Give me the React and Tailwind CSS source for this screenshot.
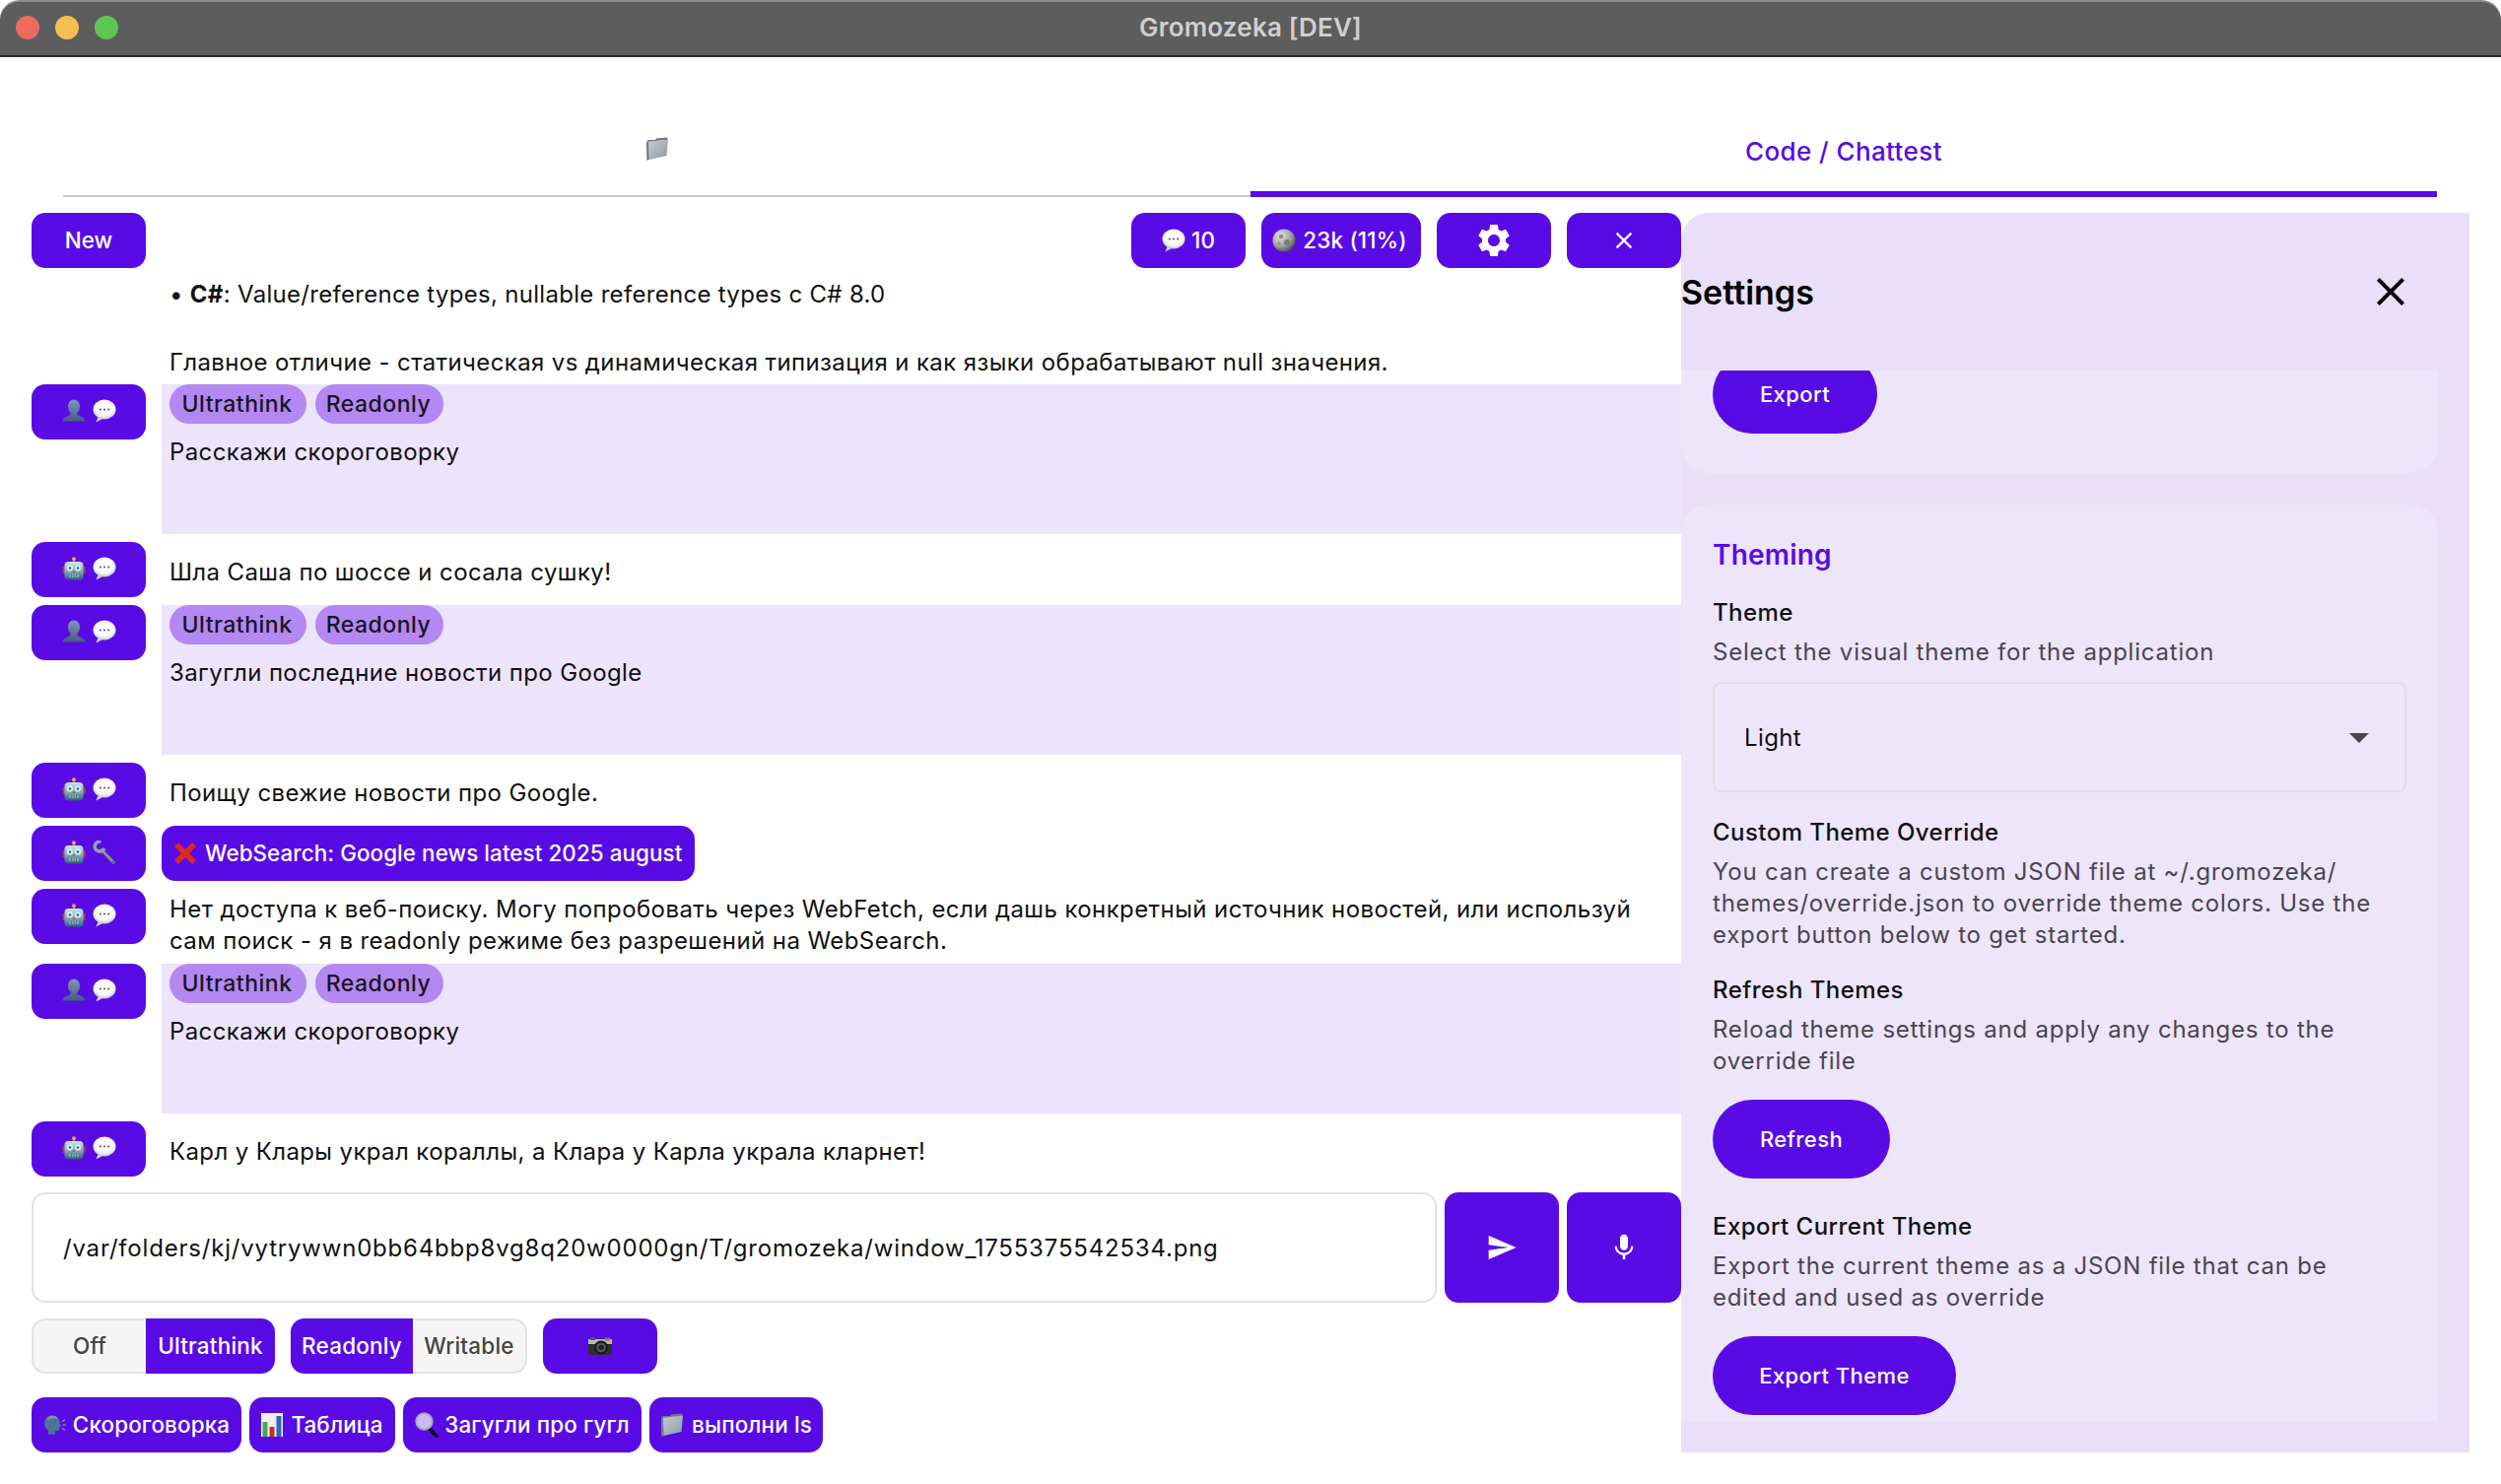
import React from "react";

const Bubble = ({ s = 24 }) => (
  <svg width={s} height={s} viewBox="0 0 24 24" className="shrink-0">
    <defs>
      <radialGradient id="bubG" cx="50%" cy="40%" r="60%">
        <stop offset="0%" stopColor="#ffffff" />
        <stop offset="70%" stopColor="#f6f6f6" />
        <stop offset="100%" stopColor="#c4c4c8" />
      </radialGradient>
    </defs>
    <path d="M6 17 L3.500 23.500 L11 19.500z" fill="#d6d6da" />
    <ellipse cx="12" cy="10.500" rx="11.500" ry="10" fill="url(#bubG)" />
    <circle cx="7.800" cy="10.500" r="1" fill="#555" />
    <circle cx="12" cy="10.500" r="1" fill="#555" />
    <circle cx="16.200" cy="10.500" r="1" fill="#555" />
  </svg>
);

const Bust = () => (
  <svg width="24" height="24" viewBox="0 0 24 24" className="shrink-0">
    <defs>
      <linearGradient id="bustG" x1="0" y1="0" x2="0" y2="1">
        <stop offset="0%" stopColor="#7d97ba" />
        <stop offset="100%" stopColor="#455a84" />
      </linearGradient>
    </defs>
    <path
      d="M12 .5c3.600 0 6 3 6 6.800 0 3-1.200 5.300-2.600 6.700-.4 1.400.2 2.300 1.800 3 2.700 1 5.800 2 6.300 5.500H.5c.5-3.500 3.600-4.500 6.300-5.500 1.600-.7 2.200-1.600 1.800-3C7.200 12.600 6 10.300 6 7.300 6 3.500 8.400.5 12 .5z"
      fill="url(#bustG)"
    />
  </svg>
);

const Robot = () => (
  <svg width="24" height="24" viewBox="0 0 24 24" className="shrink-0">
    <defs>
      <linearGradient id="robG" x1="0" y1="0" x2="0" y2="1">
        <stop offset="0%" stopColor="#cfe9f0" />
        <stop offset="50%" stopColor="#7db2c4" />
        <stop offset="100%" stopColor="#2f5f74" />
      </linearGradient>
    </defs>
    <rect x="11" y="2" width="2" height="4" fill="#9a8a60" />
    <circle cx="12" cy="2.200" r="2" fill="#f0a830" />
    <rect x=".5" y="10" width="3" height="7" rx="1" fill="#b5402f" />
    <rect x="20.500" y="10" width="3" height="7" rx="1" fill="#b5402f" />
    <rect x="2.500" y="5" width="19" height="18.500" rx="4" fill="url(#robG)" />
    <circle cx="8" cy="11.500" r="3" fill="#d8f2f8" />
    <circle cx="16" cy="11.500" r="3" fill="#d8f2f8" />
    <circle cx="8" cy="11.500" r="1.200" fill="#27566a" />
    <circle cx="16" cy="11.500" r="1.200" fill="#27566a" />
    <path d="M12 13l1.500 3h-3z" fill="#d5493a" />
    <rect x="7" y="17.500" width="10" height="3.500" rx="1" fill="#8fa3ac" />
    <path d="M9.500 17.500v3.500M12 17.500v3.500M14.500 17.500v3.500" stroke="#46606d" strokeWidth=".7" />
  </svg>
);

const Wrench = () => (
  <svg width="24" height="24" viewBox="0 0 24 24" className="shrink-0">
    <path d="M9 9.500 L21 22" stroke="#6c7076" strokeWidth="3.600" strokeLinecap="round" />
    <path d="M9 9.500 L21 22" stroke="#9b9fa5" strokeWidth="1.600" strokeLinecap="round" />
    <path d="M8.500 1.200 A5 5 0 1 0 11.800 8 " fill="none" stroke="#9ea2a8" strokeWidth="3.400" />
    <circle cx="20.500" cy="21.500" r=".8" fill="#3d4045" />
  </svg>
);

const RedX = () => (
  <svg width="24" height="24" viewBox="0 0 24 24" className="shrink-0">
    <path d="M3 3 L21 21 M21 3 L3 21" stroke="#dc2b1c" strokeWidth="5.500" />
  </svg>
);

const Moon = () => (
  <svg width="24" height="24" viewBox="0 0 24 24" className="shrink-0">
    <defs>
      <radialGradient id="moonG" cx="35%" cy="30%" r="75%">
        <stop offset="0%" stopColor="#e2e2e2" />
        <stop offset="60%" stopColor="#a3a3a3" />
        <stop offset="100%" stopColor="#4e4e4e" />
      </radialGradient>
    </defs>
    <circle cx="12" cy="12" r="11.500" fill="url(#moonG)" />
    <circle cx="9" cy="8" r="2.200" fill="#8b8b8b" />
    <circle cx="15" cy="14" r="3" fill="#7b7b7b" />
    <circle cx="7" cy="15" r="1.500" fill="#929292" />
  </svg>
);

const Camera = () => (
  <svg width="24" height="20" viewBox="0 0 24 20" className="shrink-0">
    <rect x="0" y="3" width="24" height="16" rx="1.500" fill="#2e2e30" />
    <rect x="0" y="3" width="24" height="5" fill="#b9b9b6" />
    <rect x="2" y="1" width="5" height="3" fill="#555" />
    <rect x="17" y="1.500" width="5" height="3" fill="#777" />
    <rect x="20" y="4.500" width="3" height="2" fill="#d9b23a" />
    <circle cx="13" cy="11.500" r="7" fill="#1a1a1c" />
    <circle cx="13" cy="11.500" r="4.800" fill="#5a5a60" />
    <circle cx="13" cy="11.500" r="2.800" fill="#25252a" />
  </svg>
);

const Speaking = () => (
  <svg width="24" height="24" viewBox="0 0 24 24" className="shrink-0">
    <path
      d="M9 2.500c4.500 0 7.500 3 7.500 7 0 1 .2 1.500 1 2.800.4.700 0 1.200-1 1.500.2.900.1 1.500-.4 1.800.2 1.500-.5 2.500-2.500 2.500h-1.500v3.400H5v-4C2.500 16 1 13.400 1 10.300 1 5.700 4.500 2.500 9 2.500z"
      fill="#4f7299"
    />
    <path d="M9 2.500c3 0 5 1.500 6 4-3-2-8-1.500-11 1.500C4 5 6 2.500 9 2.500z" fill="#7896b8" />
    <path d="M19 8.500l3-1.500M19.500 12h3.500M19 15.500l3 1.500" stroke="#8aa3c2" strokeWidth="1.100" />
  </svg>
);

const Chart = () => (
  <svg width="22" height="24" viewBox="0 0 22 24" className="shrink-0">
    <rect width="22" height="24" fill="#eef0f4" />
    <rect x="1.500" y="9" width="5" height="15" fill="#4ca845" />
    <rect x="8.500" y="14" width="5" height="10" fill="#c6302a" />
    <rect x="15.500" y="3" width="5" height="21" fill="#2f68b8" />
  </svg>
);

const Magnifier = () => (
  <svg width="24" height="26" viewBox="0 0 24 26" className="shrink-0">
    <path d="M14 16 L22 24.500" stroke="#111" strokeWidth="4" strokeLinecap="round" />
    <circle cx="9.500" cy="9.500" r="8.200" fill="#cdbaf2" stroke="#a8a8ac" strokeWidth="2" />
  </svg>
);

const Folder = ({ w = 24, h = 24 }) => (
  <svg width={w} height={h} viewBox="0 0 24 24" className="shrink-0">
    <defs>
      <linearGradient id="folG" x1="0" y1="0" x2="1" y2="1">
        <stop offset="0%" stopColor="#c9ced4" />
        <stop offset="100%" stopColor="#8d97a3" />
      </linearGradient>
    </defs>
    <path d="M1 4 L3 3 L10 3 L11 1.500 L22 .5 L22.500 3 L3 5z" fill="#6f7780" />
    <path d="M1 5 L23 2.500 L21.500 19 L1.500 23.500z" fill="url(#folG)" />
    <path d="M1 5 L3 5 L3.500 23 L1.500 23.500z" fill="#717a84" />
  </svg>
);

const Glyph = ({ d, size, className = "" }) => (
  <svg width={size} height={size} viewBox="0 0 24 24" fill="currentColor" className={`shrink-0 ${className}`}>
    <path d={d} />
  </svg>
);

const closeD = "M19 6.410 17.590 5 12 10.590 6.410 5 5 6.410 10.590 12 5 17.590 6.410 19 12 13.410 17.590 19 19 17.590 13.410 12z";
const gearD = "M19.140 12.940c.04-.3.06-.61.06-.94 0-.32-.02-.64-.07-.94l2.030-1.580c.18-.14.23-.41.12-.61l-1.920-3.320c-.12-.22-.37-.29-.59-.22l-2.390.96c-.5-.38-1.030-.7-1.620-.94l-.36-2.540c-.04-.24-.24-.41-.48-.41h-3.840c-.24 0-.43.17-.47.41l-.36 2.540c-.59.24-1.130.57-1.620.94l-2.390-.96c-.22-.08-.47 0-.59.22L2.740 8.870c-.12.21-.08.47.12.61l2.030 1.580c-.05.3-.09.63-.09.94s.02.64.07.94l-2.030 1.580c-.18.14-.23.41-.12.61l1.920 3.320c.12.22.37.29.59.22l2.390-.96c.5.38 1.030.7 1.620.94l.36 2.540c.05.24.24.41.48.41h3.840c.24 0 .44-.17.47-.41l.36-2.540c.59-.24 1.130-.56 1.620-.94l2.390.96c.22.08.47 0 .59-.22l1.920-3.320c.12-.22.07-.47-.12-.61l-2.010-1.580zM12 15.600c-1.980 0-3.600-1.620-3.600-3.600s1.620-3.600 3.600-3.600 3.600 1.620 3.600 3.600-1.620 3.600-3.600 3.600z";
const sendD = "M2.010 21 23 12 2.010 3 2 10l15 2-15 2z";
const micD = "M12 14c1.660 0 2.990-1.340 2.990-3L15 5c0-1.660-1.340-3-3-3S9 3.340 9 5v6c0 1.660 1.340 3 3 3zm5.300-3c0 3-2.540 5.100-5.300 5.100S6.700 14 6.700 11H5c0 3.410 2.720 6.230 6 6.720V21h2v-3.280c3.280-.48 6-3.300 6-6.720h-1.700z";

const PrimaryBtn = ({ className = "", children }) => (
  <div className={`flex h-[56px] items-center justify-center whitespace-nowrap rounded-[14px] bg-[#590be6] text-[22.400px] font-medium text-white ${className}`}>
    {children}
  </div>
);

const RowBtn = ({ a, b }) => (
  <PrimaryBtn className="w-[116px] shrink-0 gap-[7px] pb-[2px]">
    {a}
    {b}
  </PrimaryBtn>
);

const Chip = ({ children, className }) => (
  <span className={`flex h-[40px] items-center justify-center rounded-[20px] bg-[#b388f2] pr-[2px] text-[23px] font-medium tracking-[0.5px] text-[#1a1423] ${className}`}>
    {children}
  </span>
);

const UserMsg = ({ text }) => (
  <div className="flex gap-[16px]">
    <RowBtn a={<Bust />} b={<Bubble />} />
    <div className="h-[152px] flex-1 bg-[#ece3fc] pl-[8px]">
      <div className="flex gap-[9px]">
        <Chip className="w-[139px]">Ultrathink</Chip>
        <Chip className="w-[130px]">Readonly</Chip>
      </div>
      <p className="mt-[13px] text-[24px] leading-[32px] tracking-[0.38px] text-[#111]">{text}</p>
    </div>
  </div>
);

const BotMsg = ({ children, multi }) => (
  <div className="flex gap-[16px]">
    <RowBtn a={<Robot />} b={<Bubble />} />
    <div className={`flex-1 pl-[8px] pr-[30px] text-[24px] leading-[32px] text-[#111] ${multi ? "h-[68px] pt-[5px] tracking-[0.41px]" : "h-[56px] pt-[15px] tracking-[0.38px]"}`}>
      <p>{children}</p>
    </div>
  </div>
);

const SettingBlock = ({ title, lines, className = "" }) => (
  <div className={className}>
    <h3 className="text-[24px] font-medium leading-[32px] tracking-[0.45px] text-[#111]">{title}</h3>
    <div className="mt-[8px] text-[24px] leading-[32px] tracking-[0.78px] text-[#49454f]">
      {lines.map((l) => (
        <p key={l}>{l}</p>
      ))}
    </div>
  </div>
);

const Pill = ({ children, className = "" }) => (
  <div className={`flex h-[80px] items-center justify-center rounded-[40px] bg-[#590be6] text-[22px] font-medium tracking-[0.4px] text-white ${className}`}>
    {children}
  </div>
);

export default function App() {
  return (
    <div className="h-[1506px] w-[2538px] overflow-hidden bg-white [font-family:Inter,sans-serif]">
      <div className="relative flex h-[58px] items-center justify-center rounded-t-[20px] border-b-2 border-t-2 border-b-[#2b2b2b] border-t-[#8c8c8c] bg-[#5d5d5d]">
        <div className="absolute left-[16px] top-[14px] flex gap-[16px]">
          <span className="h-[24px] w-[24px] rounded-full bg-[#ee6a5f]" />
          <span className="h-[24px] w-[24px] rounded-full bg-[#f5bf4f]" />
          <span className="h-[24px] w-[24px] rounded-full bg-[#61c554]" />
        </div>
        <span className="pb-[4px] text-[26px] font-semibold tracking-[0.2px] text-[#cfcfcf]">Gromozeka [DEV]</span>
      </div>

      <div className="mx-[64px] flex h-[142px] w-[2409px]">
        <div className="flex w-[1205px] items-end justify-center border-b-2 border-[#cac4d0] pb-[35px]">
          <Folder />
        </div>
        <div className="flex w-[1204px] items-end justify-center border-b-[6px] border-[#590be6] pb-[24px] text-[26px] font-medium leading-[32px] tracking-[0.4px] text-[#590be6]">
          Code / Chattest
        </div>
      </div>

      <div className="mt-[16px] flex pl-[32px]">
        <div className="flex h-[1258px] w-[1674px] flex-col">
          <div className="flex h-[56px] gap-[16px]">
            <PrimaryBtn className="mr-auto w-[116px] text-[19.500px]">New</PrimaryBtn>
            <PrimaryBtn className="w-[116px] gap-[6px] tracking-[0.2px]">
              <Bubble />
              10
            </PrimaryBtn>
            <PrimaryBtn className="w-[162px] gap-[7px] pr-[3px] tracking-[0.2px]">
              <Moon />
              23k (11%)
            </PrimaryBtn>
            <PrimaryBtn className="w-[116px]">
              <Glyph d={gearD} size={40} />
            </PrimaryBtn>
            <PrimaryBtn className="w-[116px]">
              <Glyph d={closeD} size={28} />
            </PrimaryBtn>
          </div>

          <div className="mt-[8px] flex h-[922px] flex-col gap-[8px] overflow-hidden">
            <div className="h-[102px] shrink-0 pl-[140px] pt-[3px] text-[24px] leading-[32px] tracking-[0.38px] text-[#111]">
              <p className="tracking-[0.3px]">
                <span className="mr-[7px]">•</span>
                <b className="font-bold">C#</b>: Value/reference types, nullable reference types с C# 8.0
              </p>
              <p className="mt-[37px]">Главное отличие - статическая vs динамическая типизация и как языки обрабатывают null значения.</p>
            </div>
            <UserMsg text="Расскажи скороговорку" />
            <BotMsg>Шла Саша по шоссе и сосала сушку!</BotMsg>
            <UserMsg text="Загугли последние новости про Google" />
            <BotMsg>Поищу свежие новости про Google.</BotMsg>
            <div className="flex gap-[16px]">
              <RowBtn a={<Robot />} b={<Wrench />} />
              <PrimaryBtn className="w-[541px] justify-start gap-[8px] pl-[12px] tracking-[0.08px]">
                <RedX />
                WebSearch: Google news latest 2025 august
              </PrimaryBtn>
            </div>
            <BotMsg multi>
              Нет доступа к веб-поиску. Могу попробовать через WebFetch, если дашь конкретный источник новостей, или используй сам поиск - я в readonly режиме без разрешений на WebSearch.
            </BotMsg>
            <UserMsg text="Расскажи скороговорку" />
            <BotMsg>Карл у Клары украл кораллы, а Клара у Карла украла кларнет!</BotMsg>
          </div>

          <div className="mt-[8px] flex h-[112px] gap-[8px]">
            <div className="flex flex-1 items-center rounded-[14px] border-2 border-[#e2e2e2] pl-[30px] pt-[2px] text-[24px] tracking-[0.8px] text-[#111]">
              /var/folders/kj/vytrywwn0bb64bbp8vg8q20w0000gn/T/gromozeka/window_1755375542534.png
            </div>
            <div className="flex w-[116px] items-center justify-center rounded-[14px] bg-[#590be6] text-white">
              <Glyph d={sendD} size={32} />
            </div>
            <div className="flex w-[116px] items-center justify-center rounded-[14px] bg-[#590be6] text-white">
              <Glyph d={micD} size={32} />
            </div>
          </div>

          <div className="mt-[16px] flex h-[56px] text-[22.500px] font-medium tracking-[0.2px]">
            <div className="flex w-[116px] items-center justify-center rounded-l-[14px] border-2 border-r-0 border-[#e2e2e2] bg-[#f5f5f5] text-[#444]">Off</div>
            <div className="flex w-[131px] items-center justify-center rounded-r-[14px] bg-[#590be6] text-white">Ultrathink</div>
            <div className="ml-[16px] flex w-[124px] items-center justify-center rounded-l-[14px] bg-[#590be6] text-white">Readonly</div>
            <div className="flex w-[116px] items-center justify-center rounded-r-[14px] border-2 border-l-0 border-[#e2e2e2] bg-[#f5f5f5] text-[#444]">Writable</div>
            <div className="ml-[16px] flex w-[116px] items-center justify-center rounded-[14px] bg-[#590be6]">
              <Camera />
            </div>
          </div>

          <div className="mt-[24px] flex gap-[8px] tracking-[0.15px]">
            <PrimaryBtn className="w-[213px] gap-[6px]">
              <Speaking />
              Скороговорка
            </PrimaryBtn>
            <PrimaryBtn className="w-[148px] gap-[8px]">
              <Chart />
              Таблица
            </PrimaryBtn>
            <PrimaryBtn className="w-[242px] gap-[6px]">
              <Magnifier />
              Загугли про гугл
            </PrimaryBtn>
            <PrimaryBtn className="w-[176px] gap-[8px]">
              <Folder />
              выполни ls
            </PrimaryBtn>
          </div>
        </div>

        <div className="h-[1258px] w-[800px] rounded-tl-[28px] bg-[#e9dff9]">
          <div className="flex h-[160px] items-center justify-between pr-[56px]">
            <h2 className="text-[34px] font-semibold text-black">Settings</h2>
            <Glyph d={closeD} size={48} className="text-black" />
          </div>
          <div className="mr-[32px] h-[1066px] overflow-hidden">
            <div className="-mt-[16px] rounded-b-[28px] bg-[#ede5f9] pb-[40px] pl-[32px]">
              <Pill className="w-[167px]">Export</Pill>
            </div>
            <div className="mt-[32px] rounded-t-[28px] bg-[#ede5f9] px-[32px] pt-[31px]">
              <h2 className="text-[28px] font-semibold leading-[40px] tracking-[0.2px] text-[#590be6]">Theming</h2>
              <SettingBlock className="mt-[23px]" title="Theme" lines={["Select the visual theme for the application"]} />
              <div className="mt-[14px] flex h-[112px] w-[704px] items-center justify-between rounded-[8px] border-2 border-[#e0dde4] pl-[30px] pr-[36px] pt-[2px] text-[24px] tracking-[0.38px] text-[#111]">
                Light
                <span className="h-0 w-0 border-x-[10px] border-t-[10px] border-x-transparent border-t-[#49454f]" />
              </div>
              <SettingBlock
                className="mt-[25px]"
                title="Custom Theme Override"
                lines={[
                  "You can create a custom JSON file at ~/.gromozeka/",
                  "themes/override.json to override theme colors. Use the",
                  "export button below to get started.",
                ]}
              />
              <SettingBlock
                className="mt-[24px]"
                title="Refresh Themes"
                lines={["Reload theme settings and apply any changes to the", "override file"]}
              />
              <Pill className="mt-[23px] w-[180px]">Refresh</Pill>
              <SettingBlock
                className="mt-[33px]"
                title="Export Current Theme"
                lines={["Export the current theme as a JSON file that can be", "edited and used as override"]}
              />
              <Pill className="mt-[23px] w-[247px]">Export Theme</Pill>
              <div className="h-[40px]" />
            </div>
          </div>
        </div>
      </div>
    </div>
  );
}
